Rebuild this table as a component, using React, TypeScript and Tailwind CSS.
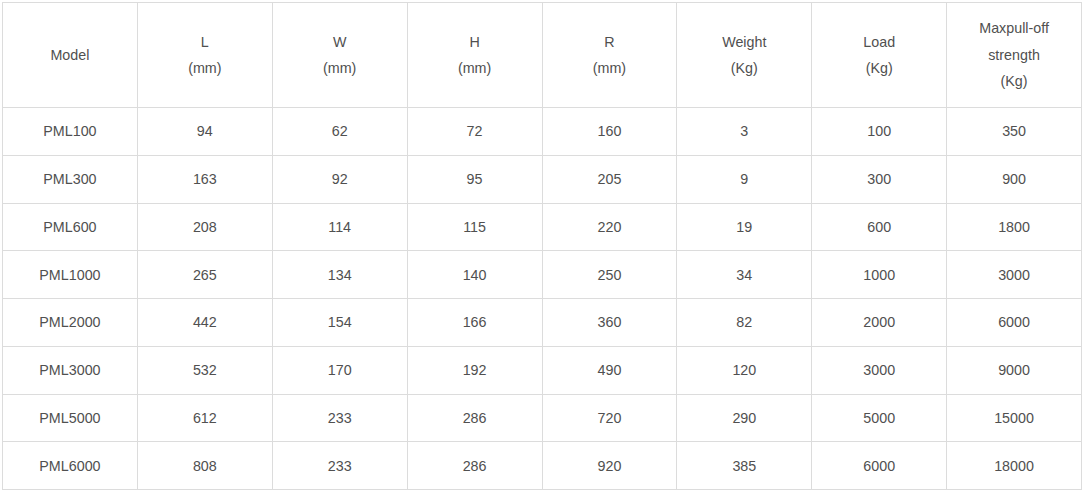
const headers: string[][] = [
  ['Model'],
  ['L', '(mm)'],
  ['W', '(mm)'],
  ['H', '(mm)'],
  ['R', '(mm)'],
  ['Weight', '(Kg)'],
  ['Load', '(Kg)'],
  ['Maxpull-off', 'strength', '(Kg)'],
];

const rows: (string | number)[][] = [
  ['PML100', 94, 62, 72, 160, 3, 100, 350],
  ['PML300', 163, 92, 95, 205, 9, 300, 900],
  ['PML600', 208, 114, 115, 220, 19, 600, 1800],
  ['PML1000', 265, 134, 140, 250, 34, 1000, 3000],
  ['PML2000', 442, 154, 166, 360, 82, 2000, 6000],
  ['PML3000', 532, 170, 192, 490, 120, 3000, 9000],
  ['PML5000', 612, 233, 286, 720, 290, 5000, 15000],
  ['PML6000', 808, 233, 286, 920, 385, 6000, 18000],
];

export default function App() {
  return (
    <div className="min-h-screen bg-white pt-[2px] pl-[2px] font-['Liberation_Sans',Arial,sans-serif] text-[14.3px] text-[#505050]">
      <table className="w-[1080px] table-fixed border-collapse border border-[#dcdcdc]">
        <thead>
          <tr>
            {headers.map((h, i) => (
              <th
                key={i}
                className="h-[105px] border border-[#dcdcdc] px-2 text-center align-middle font-normal leading-[26.5px]"
              >
                {h.map((line, j) => (
                  <div key={j}>{line}</div>
                ))}
              </th>
            ))}
          </tr>
        </thead>
        <tbody>
          {rows.map((r) => (
            <tr key={r[0]}>
              {r.map((cell, i) => (
                <td
                  key={i}
                  className="h-[47.75px] border border-[#dcdcdc] text-center align-middle leading-[20px]"
                >
                  {cell}
                </td>
              ))}
            </tr>
          ))}
        </tbody>
      </table>
    </div>
  );
}
